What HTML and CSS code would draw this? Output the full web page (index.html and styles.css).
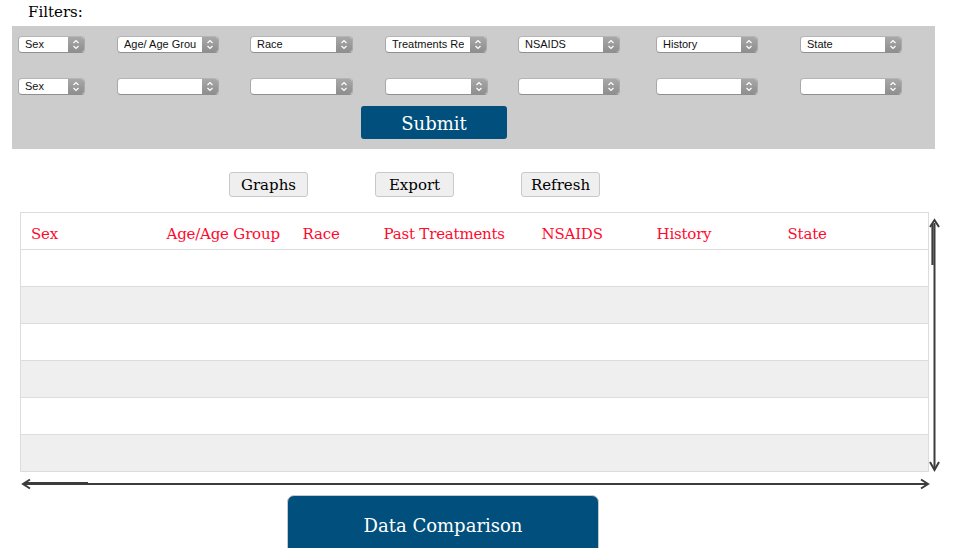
FILE: index.html
```html
<!DOCTYPE html>
<html>
<head>
<meta charset="utf-8">
<link rel="stylesheet" href="styles.css">
</head>
<body>
<div class="page">
  <div class="filters-label">Filters:</div>
  <div class="panel">
    <div class="sel-row">
      <div class="cell"><div class="sel w67"><span class="sel-text">Sex</span><span class="sel-btn"><svg width="8" height="11" viewBox="0 0 8 11"><path d="M1.5 4 L4 1.5 L6.5 4 M1.5 7 L4 9.5 L6.5 7" fill="none" stroke="#fff" stroke-width="1.2"/></svg></span></div></div>
      <div class="cell"><div class="sel"><span class="sel-text">Age/ Age Group</span><span class="sel-btn"><svg width="8" height="11" viewBox="0 0 8 11"><path d="M1.5 4 L4 1.5 L6.5 4 M1.5 7 L4 9.5 L6.5 7" fill="none" stroke="#fff" stroke-width="1.2"/></svg></span></div></div>
      <div class="cell"><div class="sel w103"><span class="sel-text">Race</span><span class="sel-btn"><svg width="8" height="11" viewBox="0 0 8 11"><path d="M1.5 4 L4 1.5 L6.5 4 M1.5 7 L4 9.5 L6.5 7" fill="none" stroke="#fff" stroke-width="1.2"/></svg></span></div></div>
      <div class="cell"><div class="sel"><span class="sel-text">Treatments Received</span><span class="sel-btn"><svg width="8" height="11" viewBox="0 0 8 11"><path d="M1.5 4 L4 1.5 L6.5 4 M1.5 7 L4 9.5 L6.5 7" fill="none" stroke="#fff" stroke-width="1.2"/></svg></span></div></div>
      <div class="cell"><div class="sel"><span class="sel-text">NSAIDS</span><span class="sel-btn"><svg width="8" height="11" viewBox="0 0 8 11"><path d="M1.5 4 L4 1.5 L6.5 4 M1.5 7 L4 9.5 L6.5 7" fill="none" stroke="#fff" stroke-width="1.2"/></svg></span></div></div>
      <div class="cell"><div class="sel"><span class="sel-text">History</span><span class="sel-btn"><svg width="8" height="11" viewBox="0 0 8 11"><path d="M1.5 4 L4 1.5 L6.5 4 M1.5 7 L4 9.5 L6.5 7" fill="none" stroke="#fff" stroke-width="1.2"/></svg></span></div></div>
      <div class="cell"><div class="sel"><span class="sel-text">State</span><span class="sel-btn"><svg width="8" height="11" viewBox="0 0 8 11"><path d="M1.5 4 L4 1.5 L6.5 4 M1.5 7 L4 9.5 L6.5 7" fill="none" stroke="#fff" stroke-width="1.2"/></svg></span></div></div>
    </div>
    <div class="sel-row row2">
      <div class="cell"><div class="sel w67"><span class="sel-text">Sex</span><span class="sel-btn"><svg width="8" height="11" viewBox="0 0 8 11"><path d="M1.5 4 L4 1.5 L6.5 4 M1.5 7 L4 9.5 L6.5 7" fill="none" stroke="#fff" stroke-width="1.2"/></svg></span></div></div>
      <div class="cell"><div class="sel"><span class="sel-text"></span><span class="sel-btn"><svg width="8" height="11" viewBox="0 0 8 11"><path d="M1.5 4 L4 1.5 L6.5 4 M1.5 7 L4 9.5 L6.5 7" fill="none" stroke="#fff" stroke-width="1.2"/></svg></span></div></div>
      <div class="cell"><div class="sel w103"><span class="sel-text"></span><span class="sel-btn"><svg width="8" height="11" viewBox="0 0 8 11"><path d="M1.5 4 L4 1.5 L6.5 4 M1.5 7 L4 9.5 L6.5 7" fill="none" stroke="#fff" stroke-width="1.2"/></svg></span></div></div>
      <div class="cell"><div class="sel w103"><span class="sel-text"></span><span class="sel-btn"><svg width="8" height="11" viewBox="0 0 8 11"><path d="M1.5 4 L4 1.5 L6.5 4 M1.5 7 L4 9.5 L6.5 7" fill="none" stroke="#fff" stroke-width="1.2"/></svg></span></div></div>
      <div class="cell"><div class="sel"><span class="sel-text"></span><span class="sel-btn"><svg width="8" height="11" viewBox="0 0 8 11"><path d="M1.5 4 L4 1.5 L6.5 4 M1.5 7 L4 9.5 L6.5 7" fill="none" stroke="#fff" stroke-width="1.2"/></svg></span></div></div>
      <div class="cell"><div class="sel"><span class="sel-text"></span><span class="sel-btn"><svg width="8" height="11" viewBox="0 0 8 11"><path d="M1.5 4 L4 1.5 L6.5 4 M1.5 7 L4 9.5 L6.5 7" fill="none" stroke="#fff" stroke-width="1.2"/></svg></span></div></div>
      <div class="cell"><div class="sel"><span class="sel-text"></span><span class="sel-btn"><svg width="8" height="11" viewBox="0 0 8 11"><path d="M1.5 4 L4 1.5 L6.5 4 M1.5 7 L4 9.5 L6.5 7" fill="none" stroke="#fff" stroke-width="1.2"/></svg></span></div></div>
    </div>
    <div class="submit-row"><button class="submit">Submit</button></div>
  </div>

  <div class="actions">
    <button class="btn">Graphs</button>
    <button class="btn">Export</button>
    <button class="btn">Refresh</button>
  </div>

  <div class="table-area">
    <table class="data">
      <colgroup>
        <col class="c1"><col class="c2"><col class="c3"><col class="c4"><col class="c5"><col class="c6"><col>
      </colgroup>
      <thead>
        <tr><th>Sex</th><th>Age/Age Group</th><th>Race</th><th>Past Treatments</th><th>NSAIDS</th><th>History</th><th>State</th></tr>
      </thead>
      <tbody>
        <tr><td></td><td></td><td></td><td></td><td></td><td></td><td></td></tr>
        <tr><td></td><td></td><td></td><td></td><td></td><td></td><td></td></tr>
        <tr><td></td><td></td><td></td><td></td><td></td><td></td><td></td></tr>
        <tr><td></td><td></td><td></td><td></td><td></td><td></td><td></td></tr>
        <tr><td></td><td></td><td></td><td></td><td></td><td></td><td></td></tr>
        <tr><td></td><td></td><td></td><td></td><td></td><td></td><td></td></tr>
      </tbody>
    </table>
    <svg class="arrow-v" width="14" height="256" viewBox="0 0 14 256">
      <path d="M4.5 7 L4.5 48" stroke="#3c3c3c" stroke-width="2.2" fill="none"/>
      <path d="M6.5 6 L6.5 253" stroke="#3c3c3c" stroke-width="2" fill="none"/>
      <path d="M2 10 L6.5 3 L11 10" stroke="#3c3c3c" stroke-width="2" fill="none"/>
      <path d="M2 245 L6.5 253 L11 245" stroke="#3c3c3c" stroke-width="2" fill="none"/>
    </svg>
    <svg class="arrow-h" width="912" height="12" viewBox="0 0 912 12">
      <path d="M4 5.5 L68 5.5" stroke="#3c3c3c" stroke-width="3" fill="none"/>
      <path d="M3 6 L908 6" stroke="#3c3c3c" stroke-width="2" fill="none"/>
      <path d="M10 1.5 L3 6 L10 10.5" stroke="#3c3c3c" stroke-width="2" fill="none"/>
      <path d="M901 1.5 L908 6 L901 10.5" stroke="#3c3c3c" stroke-width="2" fill="none"/>
    </svg>
  </div>

  <div class="compare-row"><button class="compare">Data Comparison</button></div>
</div>
</body>
</html>
```

FILE: styles.css
```css
html, body {
  margin: 0;
  padding: 0;
  background: #fff;
}
body {
  font-family: "DejaVu Serif", serif;
  color: #000;
  overflow: hidden;
}
.page {
  width: 957px;
  height: 548px;
  overflow: hidden;
}
.filters-label {
  font-size: 15px;
  line-height: 18px;
  padding: 3px 0 0 28px;
  height: 23px;
  box-sizing: border-box;
}
.panel {
  margin: 3px 22px 0 12px;
  background: #cccccc;
  height: 123px;
  box-sizing: border-box;
  padding: 10px 0 0 6px;
}
.sel-row {
  display: grid;
  grid-template-columns: 99px 133px 135px 133px 138px 144px 1fr;
  height: 18px;
}
.row2 {
  margin-top: 24px;
}
.sel {
  width: 102px;
  height: 17px;
  box-sizing: border-box;
  display: flex;
  background: #fff;
  border: 1px solid #a9a9a9;
  border-top-color: #b5b5b5;
  border-bottom-color: #8f8f8f;
  border-radius: 4px;
  overflow: hidden;
  font-family: "Liberation Sans", Arial, sans-serif;
  font-size: 11px;
  line-height: 15px;
}
.sel.w67 { width: 67px; }
.sel.w103 { width: 103px; }
.sel-text {
  flex: 1;
  margin: 0 6px 0 6px;
  white-space: nowrap;
  overflow: hidden;
  color: #111;
}
.sel-btn {
  width: 16px;
  flex: none;
  background: linear-gradient(#a8a8a8, #8e8e8e);
  display: flex;
  align-items: center;
  justify-content: center;
}
.submit-row {
  padding-left: 343px;
  margin-top: 10px;
}
.submit {
  width: 146px;
  height: 33px;
  border: 0;
  border-radius: 3px;
  background: #004f7c;
  color: #fff;
  font-family: "DejaVu Serif", serif;
  font-size: 18px;
  padding: 2px 0 0 0;
}
.actions {
  display: flex;
  gap: 67px;
  padding-left: 229px;
  margin-top: 23px;
  height: 26px;
}
.btn {
  width: 79px;
  height: 25px;
  background: #efefef;
  border: 1px solid #c9c9c9;
  border-radius: 3px;
  font-family: "DejaVu Serif", serif;
  font-size: 15px;
  color: #000;
  padding: 0;
}
.table-area {
  position: relative;
  margin: 14px 0 0 20px;
  width: 909px;
}
.data {
  width: 909px;
  border-collapse: collapse;
  table-layout: fixed;
  border: 1px solid #dcdcdc;
}
.c1 { width: 136px; }
.c2 { width: 136px; }
.c3 { width: 81px; }
.c4 { width: 158px; }
.c5 { width: 115px; }
.c6 { width: 131px; }
.data th {
  height: 37px;
  padding: 6px 0 0 10px;
  box-sizing: border-box;
  text-align: left;
  font-weight: normal;
  font-size: 15px;
  letter-spacing: -0.2px;
  color: #ff0a2e;
  border-bottom: 1px solid #dcdcdc;
  white-space: nowrap;
}
.data td {
  height: 36px;
  padding: 0;
  border-bottom: 1px solid #dcdcdc;
}
.data tbody tr:nth-child(even) td {
  background: #efefef;
}
.arrow-v {
  position: absolute;
  left: 908px;
  top: 5px;
}
.arrow-h {
  position: absolute;
  left: 0;
  top: 266px;
}
.compare-row {
  padding-left: 287px;
  margin-top: 23px;
}
.compare {
  width: 312px;
  height: 60px;
  border: 1px solid #c8c8c8;
  border-radius: 7px;
  background: #004f7c;
  color: #fff;
  font-family: "DejaVu Serif", serif;
  font-size: 18px;
  padding: 0;
}
```
